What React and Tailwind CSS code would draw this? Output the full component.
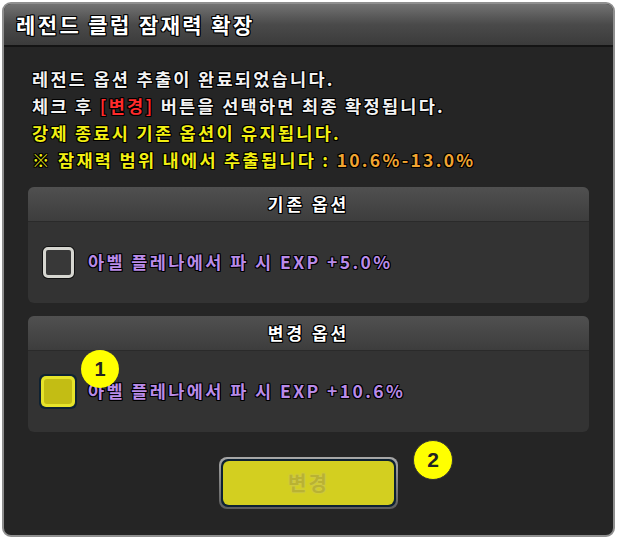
const outline =
  "[text-shadow:1px_1px_0_#000,-1px_-1px_0_#000,1px_-1px_0_#000,-1px_1px_0_#000,0_1px_0_#000,0_-1px_0_#000,1px_0_0_#000,-1px_0_0_#000]";

const OptionPanel = ({ title, checked, value }) => (
  <div className="rounded-[6px] overflow-hidden bg-[#333333]">
    <div className="h-[35px] flex items-center justify-center bg-gradient-to-b from-[#505050] to-[#3d3d3d] border-b border-[#2a2a2a]">
      <span className={`text-[17px] font-bold text-white tracking-[3px] ${outline}`}>{title}</span>
    </div>
    <div className="h-[81px] flex items-center">
      <div className="w-[60px] flex justify-center">
        {checked ? (
          <div className="w-[38px] h-[35px] rounded-[6px] bg-[#0e2233] p-[2px]">
            <div className="w-full h-full rounded-[5px] bg-[#e6e42a] p-[3px]">
              <div className="w-full h-full rounded-[3px] bg-[#c3bd14]" />
            </div>
          </div>
        ) : (
          <div className="w-[31px] h-[31px] rounded-[5px] border-[3px] border-[#d6d6d0] bg-[#383838] shadow-[0_0_0_1px_#111]" />
        )}
      </div>
      <span className={`text-[17.5px] font-bold text-[#b98be8] tracking-[2.4px] ${outline}`}>
        {value}
      </span>
    </div>
  </div>
);

export default function App() {
  return (
    <div className="relative w-[617px] h-[539px] bg-white p-[2px] font-['Noto_Sans_CJK_KR',sans-serif]">
      <div className="h-full flex flex-col rounded-[9px] border-2 border-[#8f8f8f] bg-[#252525] overflow-hidden">
        <div className="h-[43px] flex items-center pl-[12px] bg-gradient-to-b from-[#737373] via-[#4a4a4a] to-[#3b3b3b] border-b-2 border-[#141414]">
          <span className={`text-[21px] font-bold text-white tracking-[2.4px] ${outline}`}>
            레전드 클럽 잠재력 확장
          </span>
        </div>

        <div className="px-[24px] pt-[18px]">
          <div className={`pl-[4px] text-[17.5px] font-bold leading-[27px] tracking-[2.3px] ${outline}`}>
            <p className="text-[#f2f2f2]">레전드 옵션 추출이 완료되었습니다.</p>
            <p className="text-[#f2f2f2]">
              체크 후 <span className="text-[#ff2b2b]">[변경]</span> 버튼을 선택하면 최종 확정됩니다.
            </p>
            <p className="text-[#f2ef12]">강제 종료시 기존 옵션이 유지됩니다.</p>
            <p className="text-[#f2ef12]">
              ※ 잠재력 범위 내에서 추출됩니다 : <span className="text-[#f0a431]">10.6%-13.0%</span>
            </p>
          </div>

          <div className="mt-[14px] flex flex-col gap-[13px]">
            <OptionPanel title="기존 옵션" value="아벨 플레나에서 파 시 EXP +5.0%" />
            <OptionPanel title="변경 옵션" checked value="아벨 플레나에서 파 시 EXP +10.6%" />
          </div>

          <div className="mt-[25px] flex justify-center">
            <div className="w-[179px] h-[52px] rounded-[8px] bg-gradient-to-b from-[#a8a8a8] to-[#5c5c5c] p-[2px]">
              <div className="w-full h-full rounded-[7px] bg-[#0d2133] p-[2px]">
                <div className="w-full h-full rounded-[6px] bg-[#d3cf20] flex items-center justify-center">
                  <span className="text-[20px] font-bold text-[#b9b232] tracking-[2px] [text-shadow:0_0_2px_#c9c27a]">
                    변경
                  </span>
                </div>
              </div>
            </div>
          </div>
        </div>
      </div>

      <div className="absolute left-[81px] top-[350px] w-[38px] h-[38px] rounded-full bg-[#ffff00] flex items-center justify-center">
        <span className="text-[20px] font-bold text-[#222] font-['Liberation_Sans',sans-serif]">1</span>
      </div>
      <div className="absolute left-[413px] top-[440px] w-[40px] h-[40px] rounded-full bg-[#ffff00] border border-[#333] flex items-center justify-center">
        <span className="text-[21px] font-bold text-[#222] font-['Liberation_Sans',sans-serif]">2</span>
      </div>
    </div>
  );
}
